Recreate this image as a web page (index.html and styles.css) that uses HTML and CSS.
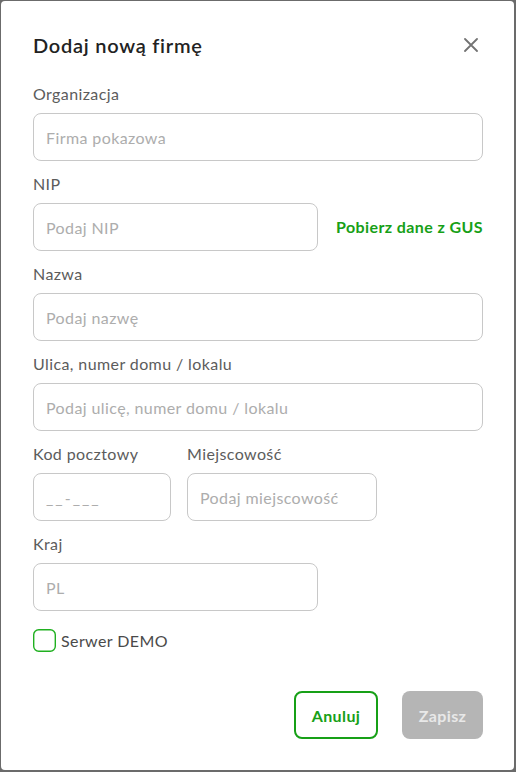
FILE: index.html
```html
<!DOCTYPE html>
<html lang="pl">
<head>
<meta charset="utf-8">
<title>Dodaj nową firmę</title>
<link rel="stylesheet" href="styles.css">
</head>
<body>
<div class="dialog">
  <header class="head">
    <h2 class="title">Dodaj nową firmę</h2>
    <button class="close" type="button" aria-label="Zamknij">
      <svg width="14" height="14" viewBox="0 0 14 14"><path d="M1 1 L13 13 M13 1 L1 13" stroke="#737373" stroke-width="1.8" stroke-linecap="round" fill="none"/></svg>
    </button>
  </header>
  <form class="form">
    <div class="field">
      <label class="label">Organizacja</label>
      <input class="input" placeholder="Firma pokazowa">
    </div>
    <div class="field">
      <label class="label">NIP</label>
      <div class="nip-row">
        <input class="input half" placeholder="Podaj NIP">
        <a class="gus" href="#">Pobierz dane z GUS</a>
      </div>
    </div>
    <div class="field">
      <label class="label">Nazwa</label>
      <input class="input" placeholder="Podaj nazwę">
    </div>
    <div class="field">
      <label class="label">Ulica, numer domu / lokalu</label>
      <input class="input" placeholder="Podaj ulicę, numer domu / lokalu">
    </div>
    <div class="pair">
      <div class="field zip">
        <label class="label">Kod pocztowy</label>
        <input class="input" placeholder="__-___">
      </div>
      <div class="field city">
        <label class="label">Miejscowość</label>
        <input class="input" placeholder="Podaj miejscowość">
      </div>
    </div>
    <div class="field">
      <label class="label">Kraj</label>
      <input class="input half" placeholder="PL">
    </div>
    <label class="check">
      <svg class="box" width="23" height="23" viewBox="0 0 23 23"><rect x="0.7" y="0.7" width="21.6" height="21.6" rx="5" ry="5" fill="#fff" stroke="#20b020" stroke-width="1.4"/></svg>
      <span class="check-text">Serwer DEMO</span>
    </label>
    <div class="actions">
      <button class="btn btn-outline" type="button">Anuluj</button>
      <button class="btn btn-disabled" type="button">Zapisz</button>
    </div>
  </form>
</div>
</body>
</html>
```
FILE: styles.css
```css
* { box-sizing: border-box; }
html, body { margin: 0; padding: 0; }
body {
  background: #6b6b6b;
  width: 516px;
  height: 772px;
  padding: 1px 0 0 1px;
  font-family: "Lato", "Open Sans", sans-serif;
  letter-spacing: 0.4px;
}
.dialog {
  width: 513px;
  height: 769px;
  background: #fff;
  border-radius: 4px;
  padding: 32px 31px 0 32px;
}
.head {
  display: flex;
  align-items: center;
  justify-content: space-between;
  height: 24px;
  margin-bottom: 27px;
}
.title {
  margin: 0;
  font-size: 20px;
  line-height: 24px;
  font-weight: 600;
  color: #222;
  letter-spacing: 0.75px;
}
.close {
  width: 24px;
  height: 24px;
  padding: 0;
  border: 0;
  background: none;
  display: flex;
  align-items: center;
  justify-content: center;
}
.form {
  display: flex;
  flex-direction: column;
  gap: 13px;
}
.field {
  display: flex;
  flex-direction: column;
}
.label {
  font-size: 16px;
  line-height: 20px;
  color: #5c5c5c;
  margin-bottom: 9px;
}
.input {
  width: 450px;
  height: 48px;
  border: 1px solid #c8c8c8;
  border-radius: 8px;
  padding: 0 12px;
  font-family: inherit;
  font-size: 16px;
  letter-spacing: 0.4px;
  color: #333;
  outline: none;
}
.input::placeholder { color: #adadad; }
.input.half { width: 285px; }
.nip-row {
  display: flex;
  align-items: center;
  justify-content: space-between;
}
.gus {
  color: #17a017;
  font-weight: 700;
  font-size: 16px;
  text-decoration: none;
  margin-bottom: 2px;
}
.pair {
  display: flex;
  gap: 16px;
}
.zip .input { width: 138px; letter-spacing: 2px; }
.city .input { width: 190px; }
.check {
  display: flex;
  align-items: center;
  gap: 5px;
  margin-top: 5px;
  font-size: 16px;
  color: #4a4a4a;
  height: 23px;
}
.box {
  display: block;
  flex-shrink: 0;
}
.actions {
  display: flex;
  justify-content: flex-end;
  gap: 24px;
  margin-top: 26px;
}
.btn {
  height: 48px;
  border-radius: 8px;
  font-family: inherit;
  font-size: 16px;
  font-weight: 700;
  letter-spacing: 0.4px;
}
.btn-outline {
  width: 84px;
  border: 2px solid #17a017;
  background: #fff;
  color: #17a017;
}
.btn-disabled {
  width: 81px;
  border: 0;
  background: #b5b5b5;
  color: #e8e8e8;
}
```
